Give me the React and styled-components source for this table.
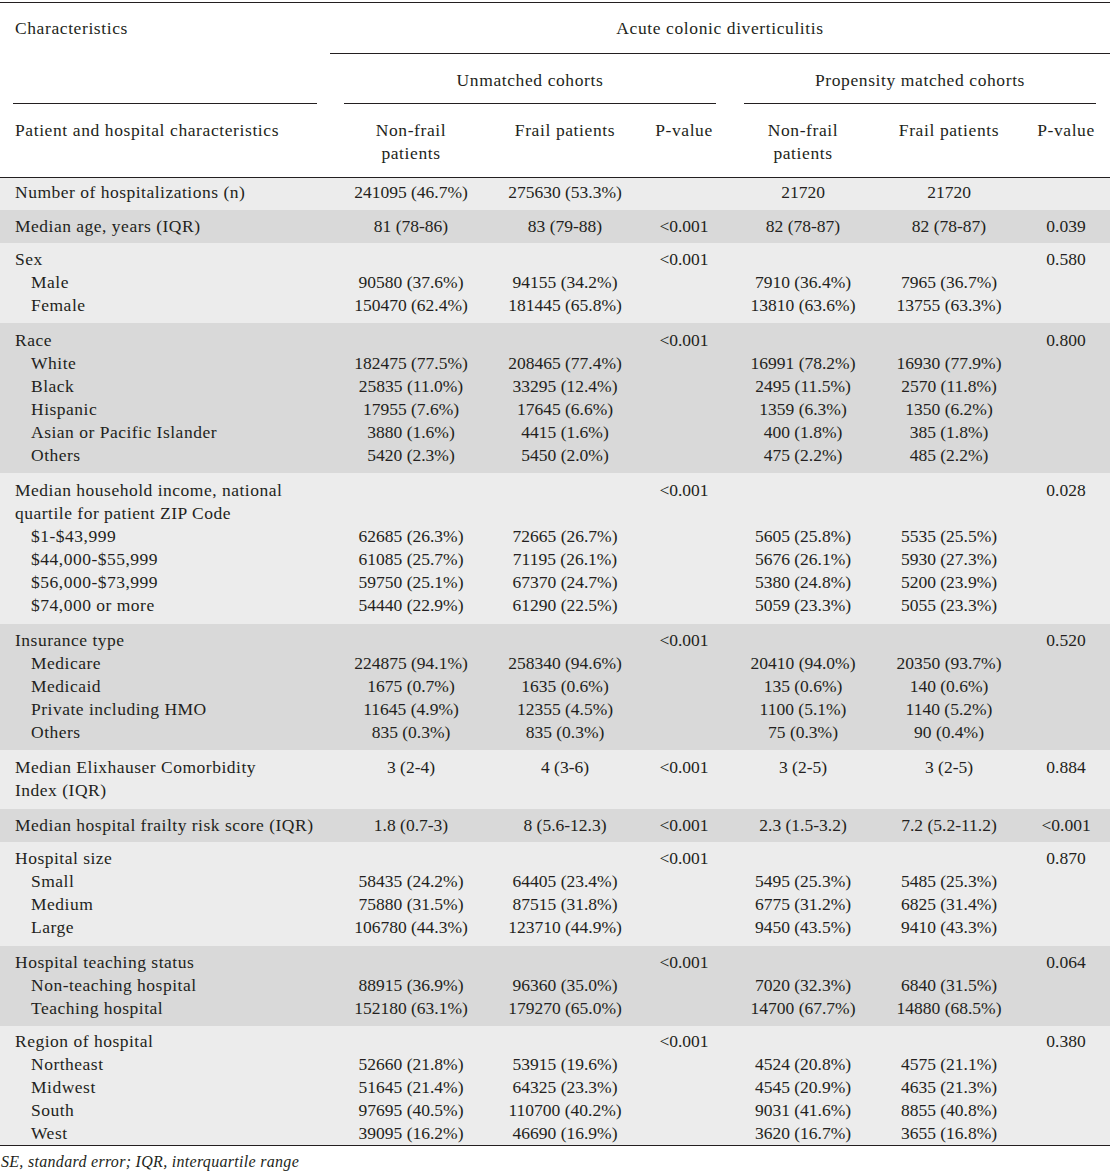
import React from "react";
import styled, { createGlobalStyle } from "styled-components";

const GlobalStyle = createGlobalStyle`
  html, body {
    margin: 0;
    padding: 0;
    background: #fff;
  }
  body {
    font-family: "Liberation Serif", "Times New Roman", serif;
    color: #231f20;
  }
`;

const Page = styled.div`
  width: 1110px;
  padding-top: 2px;
`;

const Table = styled.table`
  width: 1110px;
  border-collapse: collapse;
  table-layout: fixed;
  font-size: 17.5px;
  line-height: 23px;
  border-top: 1px solid #231f20;
  border-bottom: 1px solid #231f20;
`;

const HeadCell = styled.th`
  font-weight: normal;
  padding: 0;
  vertical-align: top;
  letter-spacing: 0.6px;
  text-align: ${(p) => (p.left ? "left" : "center")};
`;

const Rule = styled.div`
  height: ${(p) => p.h}px;
  box-sizing: border-box;
  margin: 0 ${(p) => p.inset || 0}px;
  padding-top: ${(p) => p.top || 0}px;
  padding-left: ${(p) => p.pl || 0}px;
  border-bottom: 1px solid #231f20;
`;

const ColumnRow = styled.tr`
  border-bottom: 1px solid #231f20;
  th {
    padding: 15px 2px 12px;
  }
  th:first-child {
    padding-left: 15px;
    letter-spacing: 0.6px;
  }
`;

const Group = styled.tbody`
  background: ${(p) => (p.dark ? "#d9d9d9" : "#ececec")};
  tr:first-child td {
    padding-top: ${(p) => p.pt}px;
  }
  tr:last-child td {
    padding-bottom: ${(p) => p.pb}px;
  }
`;

const Cell = styled.td`
  padding: 0 2px;
  text-align: center;
  white-space: nowrap;
`;

const LabelCell = styled.td`
  padding: 0 0 0 ${(p) => (p.sub ? 31 : 15)}px;
  text-align: left;
  white-space: nowrap;
  letter-spacing: 0.5px;
`;

const Footnote = styled.div`
  font-style: italic;
  font-size: 16px;
  line-height: 20px;
  letter-spacing: 0.3px;
  padding: 6px 0 0 1px;
`;

const widths = [330, 162, 146, 92, 146, 146, 88];

const groups = [
  {
    pt: 3,
    pb: 6,
    lines: [
      ["Number of hospitalizations (n)", "241095 (46.7%)", "275630 (53.3%)", "", "21720", "21720", ""],
    ],
  },
  {
    dark: true,
    pt: 5,
    pb: 5,
    lines: [["Median age, years (IQR)", "81 (78-86)", "83 (79-88)", "<0.001", "82 (78-87)", "82 (78-87)", "0.039"]],
  },
  {
    pt: 5,
    pb: 6,
    lines: [
      ["Sex", "", "", "<0.001", "", "", "0.580"],
      ["Male", "90580 (37.6%)", "94155 (34.2%)", "", "7910 (36.4%)", "7965 (36.7%)", "", true],
      ["Female", "150470 (62.4%)", "181445 (65.8%)", "", "13810 (63.6%)", "13755 (63.3%)", "", true],
    ],
  },
  {
    dark: true,
    pt: 6,
    pb: 6,
    lines: [
      ["Race", "", "", "<0.001", "", "", "0.800"],
      ["White", "182475 (77.5%)", "208465 (77.4%)", "", "16991 (78.2%)", "16930 (77.9%)", "", true],
      ["Black", "25835 (11.0%)", "33295 (12.4%)", "", "2495 (11.5%)", "2570 (11.8%)", "", true],
      ["Hispanic", "17955 (7.6%)", "17645 (6.6%)", "", "1359 (6.3%)", "1350 (6.2%)", "", true],
      ["Asian or Pacific Islander", "3880 (1.6%)", "4415 (1.6%)", "", "400 (1.8%)", "385 (1.8%)", "", true],
      ["Others", "5420 (2.3%)", "5450 (2.0%)", "", "475 (2.2%)", "485 (2.2%)", "", true],
    ],
  },
  {
    pt: 6,
    pb: 7,
    lines: [
      ["Median household income, national", "", "", "<0.001", "", "", "0.028"],
      ["quartile for patient ZIP Code", "", "", "", "", "", ""],
      ["$1-$43,999", "62685 (26.3%)", "72665 (26.7%)", "", "5605 (25.8%)", "5535 (25.5%)", "", true],
      ["$44,000-$55,999", "61085 (25.7%)", "71195 (26.1%)", "", "5676 (26.1%)", "5930 (27.3%)", "", true],
      ["$56,000-$73,999", "59750 (25.1%)", "67370 (24.7%)", "", "5380 (24.8%)", "5200 (23.9%)", "", true],
      ["$74,000 or more", "54440 (22.9%)", "61290 (22.5%)", "", "5059 (23.3%)", "5055 (23.3%)", "", true],
    ],
  },
  {
    dark: true,
    pt: 5,
    pb: 6,
    lines: [
      ["Insurance type", "", "", "<0.001", "", "", "0.520"],
      ["Medicare", "224875 (94.1%)", "258340 (94.6%)", "", "20410 (94.0%)", "20350 (93.7%)", "", true],
      ["Medicaid", "1675 (0.7%)", "1635 (0.6%)", "", "135 (0.6%)", "140 (0.6%)", "", true],
      ["Private including HMO", "11645 (4.9%)", "12355 (4.5%)", "", "1100 (5.1%)", "1140 (5.2%)", "", true],
      ["Others", "835 (0.3%)", "835 (0.3%)", "", "75 (0.3%)", "90 (0.4%)", "", true],
    ],
  },
  {
    pt: 6,
    pb: 7,
    lines: [
      ["Median Elixhauser Comorbidity", "3 (2-4)", "4 (3-6)", "<0.001", "3 (2-5)", "3 (2-5)", "0.884"],
      ["Index (IQR)", "", "", "", "", "", ""],
    ],
  },
  {
    dark: true,
    pt: 5,
    pb: 5,
    lines: [
      ["Median hospital frailty risk score (IQR)", "1.8 (0.7-3)", "8 (5.6-12.3)", "<0.001", "2.3 (1.5-3.2)", "7.2 (5.2-11.2)", "<0.001"],
    ],
  },
  {
    pt: 5,
    pb: 7,
    lines: [
      ["Hospital size", "", "", "<0.001", "", "", "0.870"],
      ["Small", "58435 (24.2%)", "64405 (23.4%)", "", "5495 (25.3%)", "5485 (25.3%)", "", true],
      ["Medium", "75880 (31.5%)", "87515 (31.8%)", "", "6775 (31.2%)", "6825 (31.4%)", "", true],
      ["Large", "106780 (44.3%)", "123710 (44.9%)", "", "9450 (43.5%)", "9410 (43.3%)", "", true],
    ],
  },
  {
    dark: true,
    pt: 5,
    pb: 6,
    lines: [
      ["Hospital teaching status", "", "", "<0.001", "", "", "0.064"],
      ["Non-teaching hospital", "88915 (36.9%)", "96360 (35.0%)", "", "7020 (32.3%)", "6840 (31.5%)", "", true],
      ["Teaching hospital", "152180 (63.1%)", "179270 (65.0%)", "", "14700 (67.7%)", "14880 (68.5%)", "", true],
    ],
  },
  {
    pt: 4,
    pb: 0,
    lines: [
      ["Region of hospital", "", "", "<0.001", "", "", "0.380"],
      ["Northeast", "52660 (21.8%)", "53915 (19.6%)", "", "4524 (20.8%)", "4575 (21.1%)", "", true],
      ["Midwest", "51645 (21.4%)", "64325 (23.3%)", "", "4545 (20.9%)", "4635 (21.3%)", "", true],
      ["South", "97695 (40.5%)", "110700 (40.2%)", "", "9031 (41.6%)", "8855 (40.8%)", "", true],
      ["West", "39095 (16.2%)", "46690 (16.9%)", "", "3620 (16.7%)", "3655 (16.8%)", "", true],
    ],
  },
];

const columnHeads = [
  <>Non-frail<br />patients</>,
  "Frail patients",
  "P-value",
  <>Non-frail<br />patients</>,
  "Frail patients",
  "P-value",
];

const App = () => {
  return (
    <Page>
      <GlobalStyle />
      <Table>
        <colgroup>
          {widths.map((w, i) => (
            <col key={i} style={{ width: w }} />
          ))}
        </colgroup>
        <thead>
          <tr>
            <HeadCell left rowSpan={2}>
              <Rule h={101} inset={13} top={14} pl={2}>
                Characteristics
              </Rule>
            </HeadCell>
            <HeadCell colSpan={6}>
              <Rule h={51} top={14}>
                Acute colonic diverticulitis
              </Rule>
            </HeadCell>
          </tr>
          <tr>
            <HeadCell colSpan={3}>
              <Rule h={50} inset={14} top={15}>
                Unmatched cohorts
              </Rule>
            </HeadCell>
            <HeadCell colSpan={3}>
              <Rule h={50} inset={14} top={15}>
                Propensity matched cohorts
              </Rule>
            </HeadCell>
          </tr>
          <ColumnRow>
            <HeadCell left>Patient and hospital characteristics</HeadCell>
            {columnHeads.map((h, i) => (
              <HeadCell key={i}>{h}</HeadCell>
            ))}
          </ColumnRow>
        </thead>
        {groups.map((g, gi) => (
          <Group key={gi} dark={g.dark ? 1 : 0} pt={g.pt} pb={g.pb}>
            {g.lines.map((line, li) => (
              <tr key={li}>
                <LabelCell sub={line[7]}>{line[0]}</LabelCell>
                {line.slice(1, 7).map((v, vi) => (
                  <Cell key={vi}>{v}</Cell>
                ))}
              </tr>
            ))}
          </Group>
        ))}
      </Table>
      <Footnote>SE, standard error; IQR, interquartile range</Footnote>
    </Page>
  );
};

export default App;
